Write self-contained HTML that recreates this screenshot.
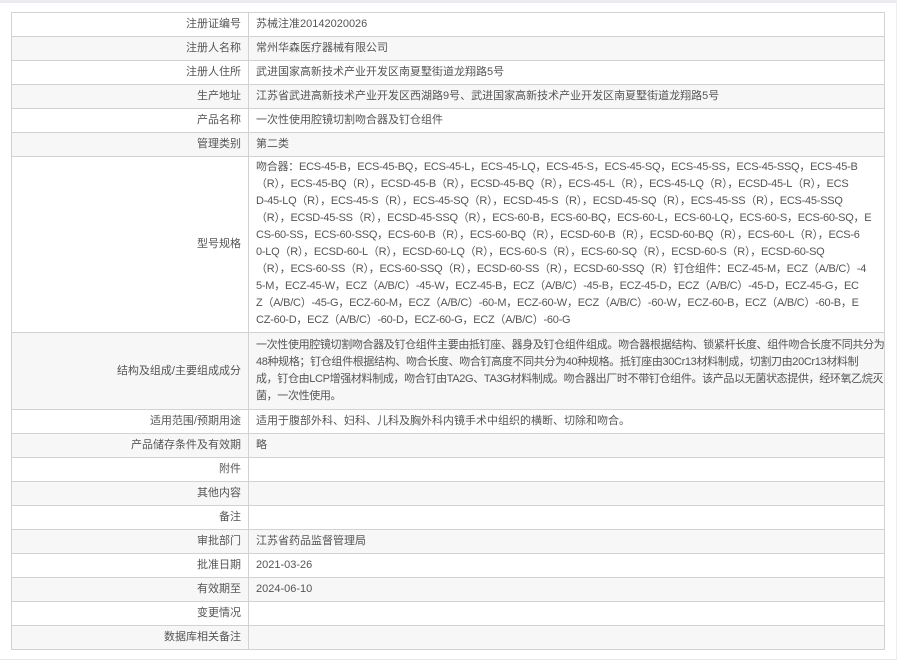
<!DOCTYPE html>
<html><head><meta charset="utf-8"><style>
html,body{margin:0;padding:0;background:#fff;width:910px;height:672px;overflow:hidden}
.top{position:absolute;left:0;top:0;width:897px;height:3px;background:#ebebef}
.panel{position:absolute;left:0;top:3px;width:897px;height:657px;border-bottom:1px solid #e6e6e6;border-right:1px solid #eee;box-sizing:border-box}
table{position:absolute;left:11px;top:12px;width:874px;border-collapse:collapse;table-layout:fixed;font-family:"Liberation Sans","Noto Sans CJK SC",sans-serif;font-size:11px;color:#555}
td{border:1px solid #d2d2d2;height:24px;padding:0 7px;line-height:17px;vertical-align:middle;overflow:hidden;box-sizing:border-box}
td.l{width:237px;text-align:right;padding-right:7px}
td.v{white-space:nowrap}
td.m{height:176px;padding:2px 7px 3px;letter-spacing:-0.25px}
td.s{height:76px;padding:4px 7px;letter-spacing:-0.35px}
tr:nth-child(even) td{background:#f7f7f7}
</style></head><body>
<div class="top"></div><div class="panel"></div>
<table>
<tr><td class="l">注册证编号</td><td class="v">苏械注准20142020026</td></tr>
<tr><td class="l">注册人名称</td><td class="v">常州华森医疗器械有限公司</td></tr>
<tr><td class="l">注册人住所</td><td class="v">武进国家高新技术产业开发区南夏墅街道龙翔路5号</td></tr>
<tr><td class="l">生产地址</td><td class="v">江苏省武进高新技术产业开发区西湖路9号、武进国家高新技术产业开发区南夏墅街道龙翔路5号</td></tr>
<tr><td class="l">产品名称</td><td class="v">一次性使用腔镜切割吻合器及钉仓组件</td></tr>
<tr><td class="l">管理类别</td><td class="v">第二类</td></tr>
<tr><td class="l">型号规格</td><td class="v m">吻合器：ECS-45-B，ECS-45-BQ，ECS-45-L，ECS-45-LQ，ECS-45-S，ECS-45-SQ，ECS-45-SS，ECS-45-SSQ，ECS-45-B<br>（R），ECS-45-BQ（R），ECSD-45-B（R），ECSD-45-BQ（R），ECS-45-L（R），ECS-45-LQ（R），ECSD-45-L（R），ECS<br>D-45-LQ（R），ECS-45-S（R），ECS-45-SQ（R），ECSD-45-S（R），ECSD-45-SQ（R），ECS-45-SS（R），ECS-45-SSQ<br>（R），ECSD-45-SS（R），ECSD-45-SSQ（R），ECS-60-B，ECS-60-BQ，ECS-60-L，ECS-60-LQ，ECS-60-S，ECS-60-SQ，E<br>CS-60-SS，ECS-60-SSQ，ECS-60-B（R），ECS-60-BQ（R），ECSD-60-B（R），ECSD-60-BQ（R），ECS-60-L（R），ECS-6<br>0-LQ（R），ECSD-60-L（R），ECSD-60-LQ（R），ECS-60-S（R），ECS-60-SQ（R），ECSD-60-S（R），ECSD-60-SQ<br>（R），ECS-60-SS（R），ECS-60-SSQ（R），ECSD-60-SS（R），ECSD-60-SSQ（R）钉仓组件：ECZ-45-M，ECZ（A/B/C）-4<br>5-M，ECZ-45-W，ECZ（A/B/C）-45-W，ECZ-45-B，ECZ（A/B/C）-45-B，ECZ-45-D，ECZ（A/B/C）-45-D，ECZ-45-G，EC<br>Z（A/B/C）-45-G，ECZ-60-M，ECZ（A/B/C）-60-M，ECZ-60-W，ECZ（A/B/C）-60-W，ECZ-60-B，ECZ（A/B/C）-60-B，E<br>CZ-60-D，ECZ（A/B/C）-60-D，ECZ-60-G，ECZ（A/B/C）-60-G</td></tr>
<tr><td class="l">结构及组成/主要组成成分</td><td class="v s">一次性使用腔镜切割吻合器及钉仓组件主要由抵钉座、器身及钉仓组件组成。吻合器根据结构、锁紧杆长度、组件吻合长度不同共分为<br>48种规格；钉仓组件根据结构、吻合长度、吻合钉高度不同共分为40种规格。抵钉座由30Cr13材料制成，切割刀由20Cr13材料制<br>成，钉仓由LCP增强材料制成，吻合钉由TA2G、TA3G材料制成。吻合器出厂时不带钉仓组件。该产品以无菌状态提供，经环氧乙烷灭<br>菌，一次性使用。</td></tr>
<tr><td class="l">适用范围/预期用途</td><td class="v">适用于腹部外科、妇科、儿科及胸外科内镜手术中组织的横断、切除和吻合。</td></tr>
<tr><td class="l">产品储存条件及有效期</td><td class="v">略</td></tr>
<tr><td class="l">附件</td><td class="v"></td></tr>
<tr><td class="l">其他内容</td><td class="v"></td></tr>
<tr><td class="l">备注</td><td class="v"></td></tr>
<tr><td class="l">审批部门</td><td class="v">江苏省药品监督管理局</td></tr>
<tr><td class="l">批准日期</td><td class="v">2021-03-26</td></tr>
<tr><td class="l">有效期至</td><td class="v">2024-06-10</td></tr>
<tr><td class="l">变更情况</td><td class="v"></td></tr>
<tr><td class="l">数据库相关备注</td><td class="v"></td></tr>
</table>
</body></html>
